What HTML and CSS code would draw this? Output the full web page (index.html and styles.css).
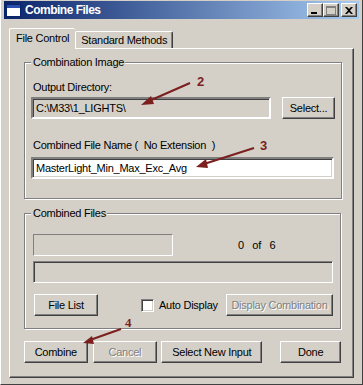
FILE: index.html
```html
<!DOCTYPE html>
<html lang="en">
<head>
  <meta charset="UTF-8" />
  <title>Combine Files</title>
  <link rel="stylesheet" href="styles.css">
</head>
<body>

  <div class="window">
    <div class="titlebar">
      <svg class="app-icon" width="15" height="13" viewBox="0 0 15 13">
        <rect x="0.5" y="0.5" width="14" height="12" fill="#fff" stroke="#0a246a"/>
        <rect x="1" y="1" width="13" height="3" fill="#2a4fb0"/>
      </svg>
      <span class="title">Combine Files</span>
      <div class="caption-btns">
        <div class="cap-btn"><svg width="8" height="7"><rect x="0" y="5" width="6" height="2" fill="#000"/></svg></div>
        <div class="cap-btn"><svg width="10" height="9"><rect x="0.5" y="0.5" width="9" height="8" fill="none" stroke="#808080"/><rect x="0" y="0" width="10" height="2" fill="#808080"/></svg></div>
        <div class="cap-btn close"><svg width="8" height="7"><path d="M0 0 L2 0 L4 2 L6 0 L8 0 L5 3.5 L8 7 L6 7 L4 5 L2 7 L0 7 L3 3.5 Z" fill="#000"/></svg></div>
      </div>
    </div>

    <div class="client">
      <div class="tabs">
        <div class="tab active">File Control</div>
        <div class="tab">Standard Methods</div>
      </div>

      <div class="panel">
        <fieldset class="group group-image">
          <legend>Combination Image</legend>
          <div class="label first">Output Directory:</div>
          <div class="row">
            <div class="edit disabled dir">C:\M33\1_LIGHTS\</div>
            <button class="btn select">Select...</button>
          </div>
          <div class="label second">Combined File Name (&nbsp; No Extension&nbsp; )</div>
          <div class="edit name">MasterLight_Min_Max_Exc_Avg</div>
        </fieldset>

        <fieldset class="group group-files">
          <legend>Combined Files</legend>
          <div class="row count-row">
            <div class="static-box"></div>
            <div class="count">0&nbsp;&nbsp; of&nbsp;&nbsp; 6</div>
          </div>
          <div class="progress"></div>
          <div class="row btn-row">
            <button class="btn file-list">File List</button>
            <label class="check"><span class="box"></span>Auto Display</label>
            <button class="btn disabled display-comb">Display Combination</button>
          </div>
        </fieldset>

        <div class="actions">
          <button class="btn combine">Combine</button>
          <button class="btn disabled cancel">Cancel</button>
          <button class="btn new-input">Select New Input</button>
          <button class="btn done">Done</button>
        </div>
      </div>
    </div>

    <svg class="notes" width="363" height="385" viewBox="0 0 363 385">
      <g fill="#7b1f1f" stroke="#7b1f1f">
        <line x1="189" y1="83" x2="148" y2="101" stroke-width="2"/>
        <polygon points="140,105 150,96 153,104" stroke="none"/>
        <line x1="253" y1="148" x2="203" y2="164" stroke-width="2"/>
        <polygon points="195,167 205,159 207,168" stroke="none"/>
        <line x1="120" y1="329" x2="89" y2="340" stroke-width="2"/>
        <polygon points="82,343 91,336 93,344" stroke="none"/>
      </g>
      <text class="num" x="196" y="86">2</text>
      <text class="num" x="259" y="150">3</text>
      <text class="num serif" x="124" y="327">4</text>
    </svg>
  </div>

</body>
</html>
```

FILE: styles.css
```css
html, body {
  margin: 0;
  padding: 0;
  background: #d4d0c8;
  font-family: "Liberation Sans", Arial, sans-serif;
  font-size: 11px;
  letter-spacing: -0.25px;
  color: #000;
}

.window {
  position: relative;
  width: 363px;
  height: 385px;
  box-sizing: border-box;
  padding: 1px 3px 3px 3px;
  background: #d4d0c8;
  border-left: 1px solid #fff;
  border-right: 1px solid #404040;
  border-bottom: 1px solid #404040;
  overflow: hidden;
}

.titlebar {
  height: 18px;
  display: flex;
  align-items: center;
  background: linear-gradient(to right, #0a246a, #a6caf0);
  padding: 0 2px 0 2px;
}

.app-icon {
  margin-right: 4px;
}

.title {
  color: #fff;
  font-weight: bold;
  font-size: 12px;
  letter-spacing: -0.5px;
  flex: 1;
}

.caption-btns {
  display: flex;
}

.cap-btn {
  width: 16px;
  height: 14px;
  box-sizing: border-box;
  border: 1px solid;
  border-color: #fff #404040 #404040 #fff;
  box-shadow: inset -1px -1px #808080;
  background: #d4d0c8;
  display: flex;
  align-items: center;
  justify-content: center;
}

.cap-btn.close {
  margin-left: 2px;
}

.client {
  padding: 9px 5px 0 5px;
}

.tabs {
  display: flex;
  align-items: flex-end;
  height: 20px;
}

.tab {
  height: 17px;
  box-sizing: border-box;
  padding: 2px 5px 0 5px;
  border: 1px solid;
  border-color: #fff #404040 transparent #fff;
  border-bottom: none;
  border-radius: 2px 2px 0 0;
  box-shadow: inset -1px 0 #808080;
  white-space: nowrap;
}

.tab.active {
  height: 21px;
  margin-bottom: -1px;
  padding: 3px 6px 0 6px;
  background: #d4d0c8;
  position: relative;
  z-index: 1;
  border-right: none;
  box-shadow: none;
}

.panel {
  height: 330px;
  box-sizing: border-box;
  border: 1px solid;
  border-color: #fff #404040 #404040 #fff;
  box-shadow: inset -1px -1px #808080;
  padding: 0 12px 0 14px;
}

.group {
  margin: 7px 0 0 0;
  padding: 0 6px 0 6px;
  border: 1px solid #808080;
  box-shadow: inset 1px 1px #fff, 1px 1px #fff;
}

.group legend {
  padding: 0 1px 0 2px;
  margin-left: 0;
  line-height: 13px;
  background: #d4d0c8;
}

.group-image {
  padding-bottom: 19px;
}

.group-files {
  margin-top: 8px;
  padding-bottom: 12px;
}

.label {
  line-height: 13px;
  margin-left: 2px;
}

.label.first {
  margin-top: 12px;
  margin-bottom: 3px;
}

.label.second {
  margin-top: 20px;
  margin-bottom: 5px;
}

.row {
  display: flex;
  align-items: center;
}

.edit {
  height: 22px;
  box-sizing: border-box;
  border: 2px solid;
  border-color: #808080 #fff #fff #808080;
  box-shadow: inset 1px 1px #404040, inset -1px -1px #d4d0c8;
  padding: 3px 0 0 3px;
  line-height: 13px;
  white-space: nowrap;
}

.edit.dir {
  width: 240px;
}

.edit.name {
  width: 303px;
  background: #fff;
}

.btn {
  height: 22px;
  box-sizing: border-box;
  font: inherit;
  letter-spacing: inherit;
  color: #000;
  background: #d4d0c8;
  border: 1px solid;
  border-color: #fff #404040 #404040 #fff;
  box-shadow: inset -1px -1px #808080;
  padding: 0;
  text-align: center;
}

.btn.disabled {
  color: #808080;
  text-shadow: 1px 1px #fff;
}

.btn.select {
  width: 53px;
  margin-left: 11px;
}

.count-row {
  margin-top: 14px;
  margin-left: 2px;
}

.static-box {
  width: 140px;
  height: 22px;
  box-sizing: border-box;
  border: 1px solid;
  border-color: #808080 #fff #fff #808080;
}

.count {
  margin-left: 65px;
}

.progress {
  width: 300px;
  height: 22px;
  box-sizing: border-box;
  margin: 5px 0 0 2px;
  border: 1px solid;
  border-color: #808080 #fff #fff #808080;
  box-shadow: inset 1px 1px #404040;
}

.btn-row {
  margin-top: 11px;
}

.btn.file-list {
  width: 64px;
  margin-left: 3px;
}

.check {
  display: flex;
  align-items: center;
  margin-left: 43px;
}

.check .box {
  width: 13px;
  height: 13px;
  box-sizing: border-box;
  border: 1px solid;
  border-color: #808080 #fff #fff #808080;
  box-shadow: inset 1px 1px #404040, inset -1px -1px #d4d0c8;
  background: #fff;
  margin-right: 5px;
}

.btn.display-comb {
  width: 107px;
  margin-left: auto;
  margin-right: 1px;
}

.actions {
  display: flex;
  margin-top: 12px;
}

.btn.combine { width: 64px; }
.btn.cancel { width: 65px; margin-left: 5px; }
.btn.new-input { width: 102px; margin-left: 4px; }
.btn.done { width: 61px; margin-left: 18px; }

.notes {
  position: absolute;
  left: 0;
  top: 0;
  pointer-events: none;
}

.notes .num {
  fill: #7b1f1f;
  font-family: "Liberation Sans", Arial, sans-serif;
  font-weight: bold;
  font-size: 13px;
  letter-spacing: 0;
}

.notes .num.serif {
  font-family: "Liberation Serif", "Times New Roman", serif;
}
```
